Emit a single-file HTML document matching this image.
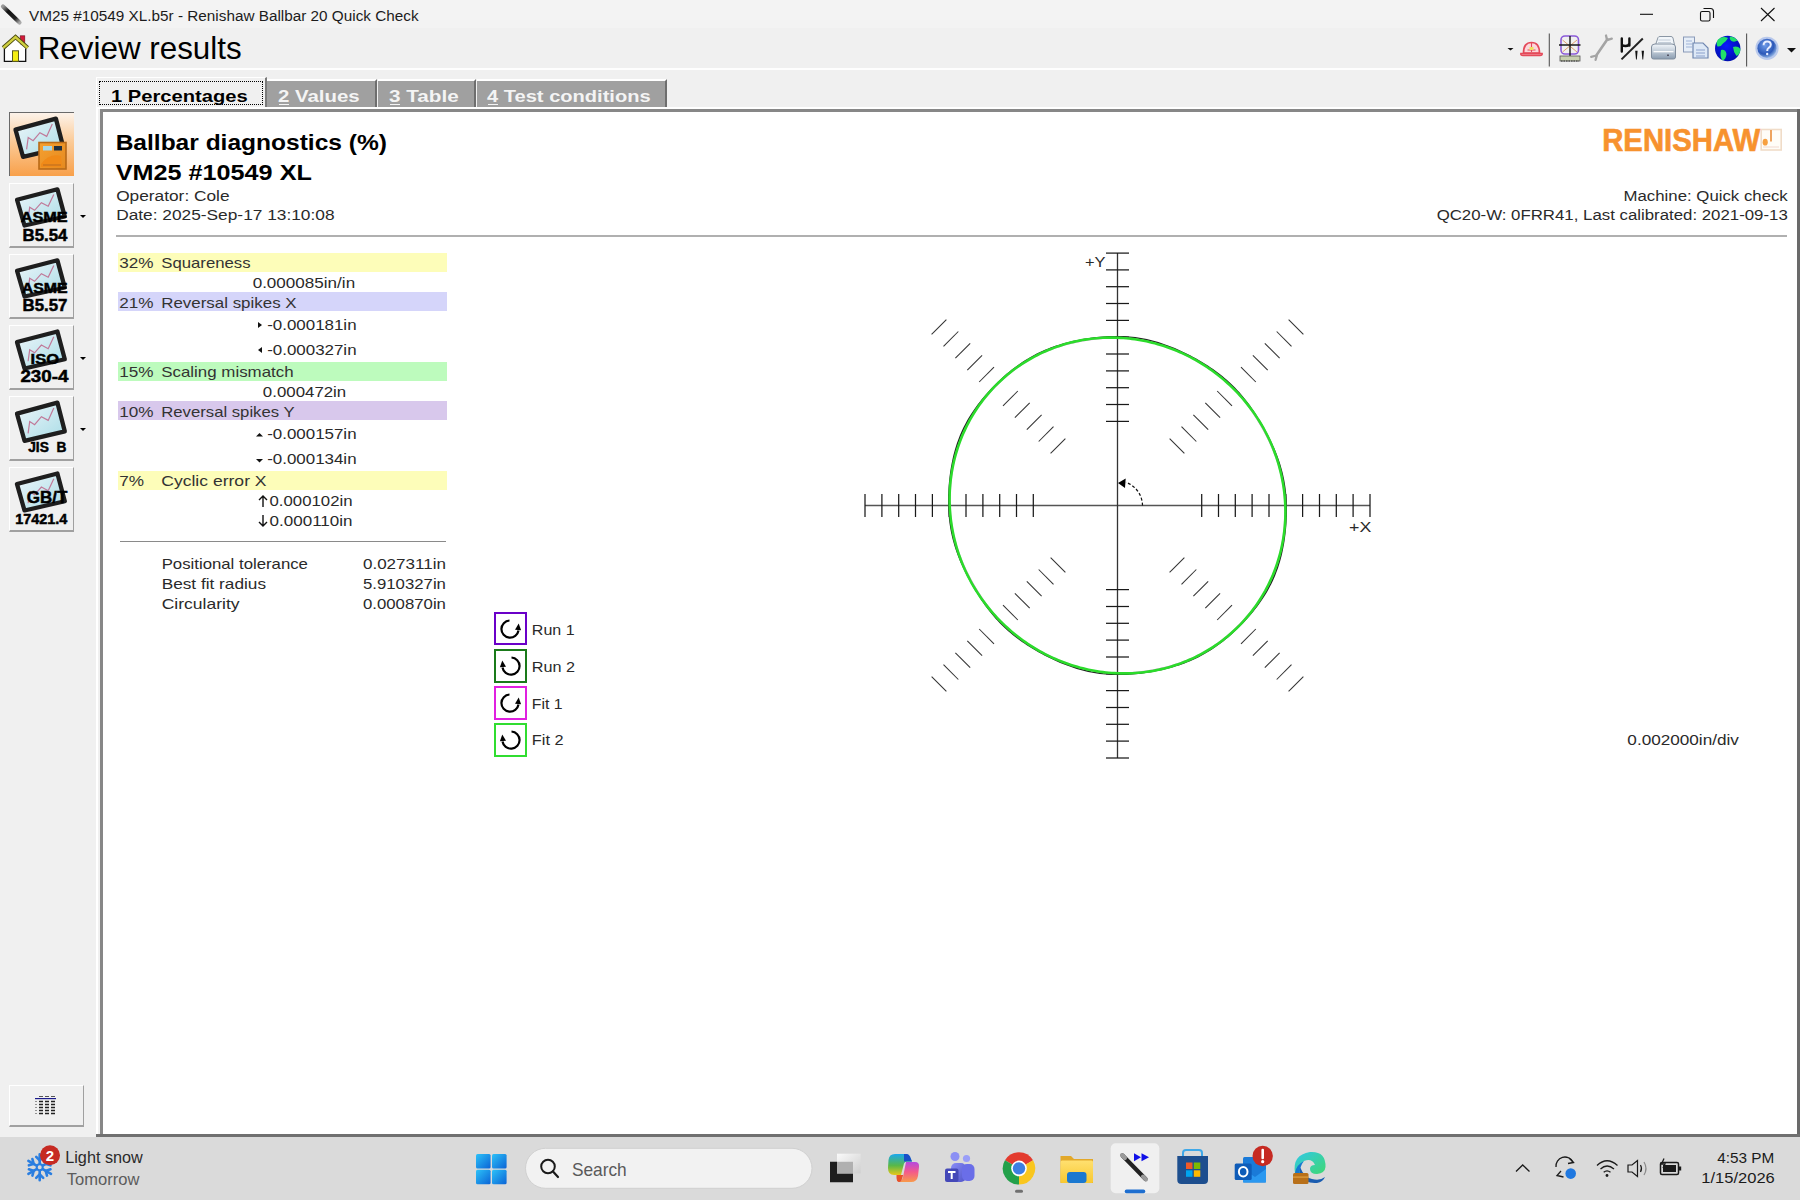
<!DOCTYPE html>
<html><head><meta charset="utf-8">
<style>
html,body{margin:0;padding:0;width:1800px;height:1200px;overflow:hidden;background:#f0f0f0;font-family:"Liberation Sans",sans-serif;}
.a{position:absolute;}
.t{position:absolute;white-space:pre;line-height:1;transform-origin:0 0;}
.btn{position:absolute;left:9px;width:65px;height:65px;box-sizing:border-box;background:#f0f0f0;border-top:1px solid #fff;border-left:1px solid #fff;border-right:1px solid #a0a0a0;border-bottom:2px solid #a0a0a0;}
.dd{position:absolute;width:0;height:0;border-left:3px solid transparent;border-right:3px solid transparent;border-top:3px solid #000;}
.tab{position:absolute;top:79px;height:28px;box-sizing:border-box;background:#a0a0a0;border-top:2px solid #fff;border-right:2px solid #6e6e6e;}
.bar{position:absolute;left:118px;width:329px;height:19px;}
svg{position:absolute;overflow:visible;}
</style></head><body>
<div class="a" style="left:0;top:0;width:1800px;height:28px;background:#f3f3f3"></div>
<!-- title icons -->
<svg style="left:0;top:0" width="40" height="70">
<defs><linearGradient id="pen" x1="0" y1="0" x2="1" y2="1"><stop offset="0" stop-color="#999"/><stop offset="0.3" stop-color="#111"/><stop offset="0.75" stop-color="#222"/><stop offset="1" stop-color="#aaa"/></linearGradient></defs>
<line x1="3" y1="6.5" x2="19.5" y2="22.5" stroke="url(#pen)" stroke-width="4.2" stroke-linecap="round"/>
<rect x="20.2" y="35.8" width="4.6" height="9" fill="#d41a3a" stroke="#6a1020" stroke-width="0.6"/>
<polygon points="15.5,40 5,49 5,61.3 26,61.3 26,49" fill="#fff"/>
<path d="M4.4 48.5 V61.3 H25.7 V48.5" fill="none" stroke="#111" stroke-width="1.3"/>
<path d="M3.2 47.8 L15.5 37 L27.6 47.8" fill="none" stroke="#4a4a10" stroke-width="4.2" stroke-linejoin="miter"/>
<path d="M3.2 47.8 L15.5 37 L27.6 47.8" fill="none" stroke="#d0d040" stroke-width="2.4" stroke-linejoin="miter"/>
<rect x="12.5" y="50.8" width="6" height="10.5" fill="#f5ee10" stroke="#5a5a20" stroke-width="1"/>
</svg>
<!-- window controls -->
<svg style="left:1630px;top:0" width="170" height="30">
<line x1="10" y1="14.3" x2="23" y2="14.3" stroke="#111" stroke-width="1.1"/>
<rect x="70.5" y="11.5" width="9.5" height="9.5" rx="1.6" fill="none" stroke="#111" stroke-width="1.1"/>
<path d="M73.5 8.5 H80.5 Q83.5 8.5 83.5 11.5 V18" fill="none" stroke="#111" stroke-width="1.1"/>
<path d="M131 8 L144.5 21 M144.5 8 L131 21" stroke="#111" stroke-width="1.1"/>
</svg>
<!-- toolbar icons -->
<svg style="left:1500px;top:30px" width="300" height="40">
<defs>
<radialGradient id="glb" cx="0.45" cy="0.4" r="0.6"><stop offset="0" stop-color="#0a18ff"/><stop offset="1" stop-color="#0010b0"/></radialGradient>
<radialGradient id="hlp" cx="0.4" cy="0.35" r="0.65"><stop offset="0" stop-color="#6f9be8"/><stop offset="0.7" stop-color="#2c58b8"/><stop offset="1" stop-color="#8aaee0"/></radialGradient>
<linearGradient id="prt" x1="0" y1="0" x2="0" y2="1"><stop offset="0" stop-color="#f4f8fc"/><stop offset="1" stop-color="#8a9cb0"/></linearGradient>
</defs>
<polygon points="7.5,18 13.5,18 10.5,20.5" fill="#111"/>
<path d="M23.5 23 Q23.5 12.5 31.5 12.5 Q39.5 12.5 39.5 23 Z" fill="#fbd8dc" stroke="#e44a5a" stroke-width="1.7"/>
<path d="M20.8 23.5 H42.2 Q42.5 25.5 40 25.5 H23 Q20.5 25.5 20.8 23.5 Z" fill="#f6a0aa" stroke="#e44a5a" stroke-width="1.4"/>
<path d="M31.5 13 V22 M27.5 20 H35.5" stroke="#e44a5a" stroke-width="1.1"/>
<rect x="29.5" y="17" width="4" height="3" fill="#f0e060"/>
<line x1="49.3" y1="3.5" x2="49.3" y2="36.5" stroke="#555" stroke-width="1.1"/>
<rect x="61" y="6" width="17.5" height="18" rx="4" fill="none" stroke="#8a5ad8" stroke-width="1.6"/>
<path d="M62.5 10 L77 22 M77 10 L62.5 22" stroke="#e0a070" stroke-width="1"/>
<path d="M59 15 H80.5 M70 6 V31" stroke="#1a1a1a" stroke-width="1.4"/>
<rect x="60" y="26" width="20" height="5" fill="#c8d0b0" stroke="#555" stroke-width="0.8"/>
<path d="M61 31 H79" stroke="#333" stroke-width="1" stroke-dasharray="1.5 1"/>
<path d="M96.6 25.1 L107.4 9.2" stroke="#a4a4a4" stroke-width="2.6" stroke-linecap="round"/>
<path d="M106.8 9 L106 5.5 M107.8 9.8 L111.8 8.6" stroke="#a4a4a4" stroke-width="2.3" stroke-linecap="round"/>
<path d="M96.4 25.5 L91.2 26.8 M96.8 25.6 L95.6 29.8" stroke="#a4a4a4" stroke-width="2.3" stroke-linecap="round"/>
<path d="M121.8 8.5 V21.5 M121.8 14 Q121.8 16 125.5 16 Q129.4 16 129.4 13 M129.4 8.5 V15.5" fill="none" stroke="#111" stroke-width="2.4" stroke-linecap="round"/>
<line x1="121.5" y1="29.4" x2="142.8" y2="8.5" stroke="#222" stroke-width="2"/>
<path d="M135.2 20.8 H137.6 L136.8 29.4 H136 Z M141.6 20.8 H144 L143.2 29.4 H142.4 Z" fill="#111"/>
<path d="M155.5 15 L158 7.5 Q158.5 6.5 160 6.5 H171 Q172.5 6.5 173 8 L174.5 15 Z" fill="#f2f6fa" stroke="#8a96a4" stroke-width="1"/>
<path d="M158.5 10 H170.5 M158 12.5 H171" stroke="#b8c4d0" stroke-width="0.8"/>
<path d="M151.5 17 Q151.5 14 155 14 H172 Q175.5 14 175.5 17 V27 Q175.5 29 173.5 29 H153.5 Q151.5 29 151.5 27 Z" fill="url(#prt)" stroke="#7f8c9c" stroke-width="1"/>
<rect x="153.5" y="21" width="20" height="1.3" fill="#fff" opacity="0.9"/>
<rect x="167" y="24.5" width="2" height="1.5" fill="#556"/>
<rect x="183.5" y="7" width="11" height="15" fill="#e6eef8" stroke="#8a9ab8" stroke-width="1"/>
<path d="M186 11 H192 M186 14 H192 M186 17 H192" stroke="#a0b4d8" stroke-width="1"/>
<path d="M193 13 H203 L208 18 V28 H193 Z" fill="#dde8f6" stroke="#6f86b0" stroke-width="1.2"/>
<path d="M196 20 H205 M196 23 H205 M196 26 H205" stroke="#8aa0cc" stroke-width="1"/>
<circle cx="227.7" cy="18.5" r="12.7" fill="url(#glb)"/>
<path d="M218 9.5 Q223 5.5 228 8 Q226 12 223 13.5 Q221 17 217.5 16.5 Q215.5 13 218 9.5 Z M230 6.5 Q235 7 237.5 10.5 Q234.5 12.5 231.5 11 Q229 9 230 6.5 Z M233 17 Q237.5 15.5 240.5 19 Q240 24.5 236.5 26 Q233.5 22.5 233 17 Z M221 20 Q225.5 19 226.5 24 Q226 29.5 222.5 30.5 Q219.5 26.5 221 20 Z" fill="#22e06a"/>
<line x1="246.6" y1="3.5" x2="246.6" y2="36.5" stroke="#555" stroke-width="1.1"/>
<circle cx="267" cy="18.3" r="11.6" fill="#b8c8ec"/>
<circle cx="267" cy="18.3" r="9.6" fill="url(#hlp)"/>
<path d="M263.6 15.2 Q263.6 11.5 267.2 11.5 Q270.8 11.5 270.8 14.8 Q270.8 16.8 268.5 18 Q267.2 18.8 267.2 21" fill="none" stroke="#e8eeff" stroke-width="2"/>
<circle cx="267.2" cy="24" r="1.2" fill="#e8eeff"/>
<polygon points="287,18 296,18 291.5,22.5" fill="#111"/>
</svg>
<!-- title bar line -->
<div class="a" style="left:0;top:68px;width:1800px;height:2px;background:#fefefe"></div>
<!-- tabs -->
<div class="a" style="left:96px;top:77px;width:171px;height:31px;box-sizing:border-box;background:#f0f0f0;border-top:1px solid #fff;border-left:1px solid #fff;border-right:2px solid #7a7a7a"></div>
<div class="a" style="left:99px;top:81px;width:164px;height:24px;box-sizing:border-box;border:1px dotted #000"></div>
<div class="tab" style="left:267px;width:110px"></div>
<div class="tab" style="left:378px;width:98px"></div>
<div class="tab" style="left:477px;width:190px"></div>
<div class="a" style="left:279px;top:104px;width:10px;height:1px;background:#f4f4f4"></div>
<div class="a" style="left:390px;top:104px;width:10px;height:1px;background:#f4f4f4"></div>
<div class="a" style="left:488px;top:104px;width:10px;height:1px;background:#f4f4f4"></div>
<!-- sidebar -->
<svg style="left:0;top:0" width="1" height="1"><defs>
<linearGradient id="scr" x1="0" y1="0" x2="1" y2="1"><stop offset="0" stop-color="#eef6fa"/><stop offset="1" stop-color="#a8dce6"/></linearGradient>
<linearGradient id="org" x1="0" y1="0" x2="0" y2="1"><stop offset="0" stop-color="#fdf4ec"/><stop offset="0.45" stop-color="#fbc995"/><stop offset="1" stop-color="#f89c40"/></linearGradient>
<linearGradient id="org2" x1="0" y1="0" x2="1" y2="1"><stop offset="0" stop-color="#f6a030"/><stop offset="1" stop-color="#e48a20"/></linearGradient>
<g id="frm"><polygon points="8,17.6 48.4,6.6 55.8,35.4 15.5,44.8" fill="url(#scr)" stroke="#1e1e1e" stroke-width="4.3" stroke-linejoin="round"/>
<polyline points="19.1,37.4 20.7,25.6 25.6,28.7 32.4,20.7 39.2,24.4 44.8,12" fill="none" stroke="#c07898" stroke-width="1.2"/></g>
</defs></svg>
<div class="a" style="left:9px;top:112px;width:65px;height:64px;box-sizing:border-box;background:linear-gradient(#fdf3ea,#fbcb98 45%,#f8a04a);border-top:1px solid #6a6a6a;border-left:1px solid #6a6a6a"></div>
<svg style="left:9px;top:112px" width="65" height="64"><use href="#frm" transform="translate(-1.5,0)"/>
<rect x="30" y="30.5" width="27" height="26.5" fill="url(#org2)" stroke="#b86a18" stroke-width="1.6"/>
<rect x="34" y="34" width="9" height="4.5" fill="#a8d8e8"/><rect x="45" y="34" width="8" height="4.5" fill="#203040"/>
<path d="M32 52 Q40 41 52 44 L53 55 L32 55 Z" fill="#f08a18"/><path d="M34 53 H52" stroke="#c27020" stroke-width="1.2"/></svg>
<div class="btn" style="top:183px"></div><svg style="left:9px;top:183px" width="65" height="65"><use href="#frm" transform="scale(1,0.95)"/></svg>
<div class="btn" style="top:254px"></div><svg style="left:9px;top:254px" width="65" height="65"><use href="#frm" transform="scale(1,0.95)"/></svg>
<div class="btn" style="top:325px"></div><svg style="left:9px;top:325px" width="65" height="65"><use href="#frm" transform="scale(1,0.97)"/></svg>
<div class="btn" style="top:396px"></div><svg style="left:9px;top:396px" width="65" height="65"><use href="#frm"/></svg>
<div class="btn" style="top:467px"></div><svg style="left:9px;top:467px" width="65" height="65"><use href="#frm" transform="scale(1,0.97)"/></svg>
<div class="dd" style="left:79.5px;top:215px"></div>
<div class="dd" style="left:79.5px;top:357px"></div>
<div class="dd" style="left:79.5px;top:428px"></div>
<div class="btn" style="top:1085px;width:75px;height:42px"></div>
<svg style="left:35px;top:1096px" width="22" height="20">
<rect x="0" y="2" width="21" height="1.2" fill="#1a1a8a"/>
<path d="M4 0.5 H8 M10 0.5 H14 M16 0.5 H20" stroke="#555" stroke-width="1"/>
<path d="M1 5 V6 M1 8 V9 M1 11 V12 M1 14 V15 M1 17 V18" stroke="#333" stroke-width="1"/>
<path d="M4 5.5 H8 M10 5.5 H14 M16 5.5 H20 M4 8.5 H8 M10 8.5 H14 M16 8.5 H20 M4 11.5 H8 M10 11.5 H14 M16 11.5 H20 M4 14.5 H8 M10 14.5 H14 M16 14.5 H20 M4 17.5 H8 M10 17.5 H14 M16 17.5 H20" stroke="#222" stroke-width="1.3"/>
</svg>
<!-- panel area -->
<div class="a" style="left:96px;top:107px;width:1704px;height:2px;background:#fff"></div>
<div class="a" style="left:96px;top:107px;width:2px;height:1030px;background:#fff"></div>
<div class="a" style="left:100px;top:109px;width:1697px;height:1025px;background:#fff;border-left:3px solid #878787;border-top:3px solid #878787;box-sizing:border-box"></div>
<div class="a" style="left:1797px;top:109px;width:3px;height:1028px;background:#6a6a6a"></div>
<div class="a" style="left:96px;top:1134px;width:1704px;height:3px;background:#707070"></div>
<!-- taskbar -->
<div class="a" style="left:0;top:1137px;width:1800px;height:63px;background:#dadada"></div>
<!-- header lines -->
<div class="a" style="left:116px;top:235px;width:1671px;height:2px;background:#b0b0b0"></div>
<!-- logo -->
<svg style="left:1755px;top:125px" width="35" height="30">
<rect x="6.2" y="4.5" width="20" height="20.5" fill="#fffdf8" stroke="#f0dcc8" stroke-width="1.6"/>
<line x1="16" y1="5" x2="16" y2="16.5" stroke="#eea460" stroke-width="2"/>
<ellipse cx="10.2" cy="17.2" rx="2.6" ry="3.4" fill="#f7a040"/>
<line x1="8" y1="22" x2="24" y2="22" stroke="#f4e0d8" stroke-width="1.2"/>
</svg>
<!-- diagnostics bars -->
<div class="bar" style="top:253px;background:#fdfdb9"></div>
<div class="bar" style="top:292px;background:#d5d5fa"></div>
<div class="bar" style="top:362px;background:#bdfbbd"></div>
<div class="bar" style="top:401px;background:#d8c8ec"></div>
<div class="bar" style="top:471px;background:#fdfdb9"></div>
<div class="a" style="left:120px;top:541px;width:326px;height:1px;background:#8a8a8a"></div>
<!-- small arrows -->
<svg style="left:0;top:0" width="1" height="1">
<polygon points="258,322 262,325 258,328" fill="#111"/>
<polygon points="262,347 258,350 262,353" fill="#111"/>
<polygon points="256,436.5 259.5,433 263,436.5" fill="#111"/>
<polygon points="256,459 259.5,462.5 263,459" fill="#111"/>
<path d="M263 507 V496 M259 500 L263 496 L267 500" stroke="#111" stroke-width="1.4" fill="none"/>
<path d="M263 515 V526 M259 522 L263 526 L267 522" stroke="#111" stroke-width="1.4" fill="none"/>
</svg>
<!-- legend -->
<div class="a" style="left:494px;top:612px;width:33px;height:33px;box-sizing:border-box;border:2px solid #6a00c8"></div>
<div class="a" style="left:494px;top:649px;width:33px;height:34px;box-sizing:border-box;border:2px solid #1a7a1a"></div>
<div class="a" style="left:494px;top:686px;width:33px;height:34px;box-sizing:border-box;border:2px solid #e020e0"></div>
<div class="a" style="left:494px;top:723px;width:33px;height:34px;box-sizing:border-box;border:2px solid #30dd30"></div>
<svg style="left:0;top:0" width="1" height="1">
<defs>
<g id="cw"><path d="M -1 -8.5 A 8.6 8.6 0 1 0 8 1.5" fill="none" stroke="#000" stroke-width="2.2"/><polygon points="4.5,0.8 10.6,1.2 8.2,-5.5" fill="#000"/></g>
</defs>
<use href="#cw" x="510.5" y="629"/>
<use href="#cw" transform="translate(510.5,666) scale(-1,1)"/>
<use href="#cw" x="510.5" y="703"/>
<use href="#cw" transform="translate(510.5,740) scale(-1,1)"/>
</svg>
<svg class="a" style="left:0;top:0" width="1800" height="1200" viewBox="0 0 1800 1200"><line x1="865.0" y1="505.5" x2="1370.0" y2="505.5" stroke="#555" stroke-width="1.3"/><line x1="1117.5" y1="253.1" x2="1117.5" y2="758.0" stroke="#333" stroke-width="1.3"/><line x1="1033.3" y1="494.0" x2="1033.3" y2="517.0" stroke="#1a1a1a" stroke-width="1.25"/><line x1="1106.0" y1="421.4" x2="1129.0" y2="421.4" stroke="#1a1a1a" stroke-width="1.25"/><line x1="1201.7" y1="494.0" x2="1201.7" y2="517.0" stroke="#1a1a1a" stroke-width="1.25"/><line x1="1106.0" y1="589.6" x2="1129.0" y2="589.6" stroke="#1a1a1a" stroke-width="1.25"/><line x1="1016.5" y1="494.0" x2="1016.5" y2="517.0" stroke="#1a1a1a" stroke-width="1.25"/><line x1="1106.0" y1="404.5" x2="1129.0" y2="404.5" stroke="#1a1a1a" stroke-width="1.25"/><line x1="1218.5" y1="494.0" x2="1218.5" y2="517.0" stroke="#1a1a1a" stroke-width="1.25"/><line x1="1106.0" y1="606.5" x2="1129.0" y2="606.5" stroke="#1a1a1a" stroke-width="1.25"/><line x1="999.7" y1="494.0" x2="999.7" y2="517.0" stroke="#1a1a1a" stroke-width="1.25"/><line x1="1106.0" y1="387.7" x2="1129.0" y2="387.7" stroke="#1a1a1a" stroke-width="1.25"/><line x1="1235.3" y1="494.0" x2="1235.3" y2="517.0" stroke="#1a1a1a" stroke-width="1.25"/><line x1="1106.0" y1="623.3" x2="1129.0" y2="623.3" stroke="#1a1a1a" stroke-width="1.25"/><line x1="982.9" y1="494.0" x2="982.9" y2="517.0" stroke="#1a1a1a" stroke-width="1.25"/><line x1="1106.0" y1="370.9" x2="1129.0" y2="370.9" stroke="#1a1a1a" stroke-width="1.25"/><line x1="1252.1" y1="494.0" x2="1252.1" y2="517.0" stroke="#1a1a1a" stroke-width="1.25"/><line x1="1106.0" y1="640.1" x2="1129.0" y2="640.1" stroke="#1a1a1a" stroke-width="1.25"/><line x1="966.0" y1="494.0" x2="966.0" y2="517.0" stroke="#1a1a1a" stroke-width="1.25"/><line x1="1106.0" y1="354.0" x2="1129.0" y2="354.0" stroke="#1a1a1a" stroke-width="1.25"/><line x1="1269.0" y1="494.0" x2="1269.0" y2="517.0" stroke="#1a1a1a" stroke-width="1.25"/><line x1="1106.0" y1="657.0" x2="1129.0" y2="657.0" stroke="#1a1a1a" stroke-width="1.25"/><line x1="949.2" y1="494.0" x2="949.2" y2="517.0" stroke="#1a1a1a" stroke-width="1.25"/><line x1="1106.0" y1="337.2" x2="1129.0" y2="337.2" stroke="#1a1a1a" stroke-width="1.25"/><line x1="1285.8" y1="494.0" x2="1285.8" y2="517.0" stroke="#1a1a1a" stroke-width="1.25"/><line x1="1106.0" y1="673.8" x2="1129.0" y2="673.8" stroke="#1a1a1a" stroke-width="1.25"/><line x1="932.4" y1="494.0" x2="932.4" y2="517.0" stroke="#1a1a1a" stroke-width="1.25"/><line x1="1106.0" y1="320.4" x2="1129.0" y2="320.4" stroke="#1a1a1a" stroke-width="1.25"/><line x1="1302.6" y1="494.0" x2="1302.6" y2="517.0" stroke="#1a1a1a" stroke-width="1.25"/><line x1="1106.0" y1="690.6" x2="1129.0" y2="690.6" stroke="#1a1a1a" stroke-width="1.25"/><line x1="915.5" y1="494.0" x2="915.5" y2="517.0" stroke="#1a1a1a" stroke-width="1.25"/><line x1="1106.0" y1="303.5" x2="1129.0" y2="303.5" stroke="#1a1a1a" stroke-width="1.25"/><line x1="1319.5" y1="494.0" x2="1319.5" y2="517.0" stroke="#1a1a1a" stroke-width="1.25"/><line x1="1106.0" y1="707.5" x2="1129.0" y2="707.5" stroke="#1a1a1a" stroke-width="1.25"/><line x1="898.7" y1="494.0" x2="898.7" y2="517.0" stroke="#1a1a1a" stroke-width="1.25"/><line x1="1106.0" y1="286.7" x2="1129.0" y2="286.7" stroke="#1a1a1a" stroke-width="1.25"/><line x1="1336.3" y1="494.0" x2="1336.3" y2="517.0" stroke="#1a1a1a" stroke-width="1.25"/><line x1="1106.0" y1="724.3" x2="1129.0" y2="724.3" stroke="#1a1a1a" stroke-width="1.25"/><line x1="881.9" y1="494.0" x2="881.9" y2="517.0" stroke="#1a1a1a" stroke-width="1.25"/><line x1="1106.0" y1="269.9" x2="1129.0" y2="269.9" stroke="#1a1a1a" stroke-width="1.25"/><line x1="1353.1" y1="494.0" x2="1353.1" y2="517.0" stroke="#1a1a1a" stroke-width="1.25"/><line x1="1106.0" y1="741.1" x2="1129.0" y2="741.1" stroke="#1a1a1a" stroke-width="1.25"/><line x1="865.0" y1="494.0" x2="865.0" y2="517.0" stroke="#1a1a1a" stroke-width="1.25"/><line x1="1106.0" y1="253.1" x2="1129.0" y2="253.1" stroke="#1a1a1a" stroke-width="1.25"/><line x1="1370.0" y1="494.0" x2="1370.0" y2="517.0" stroke="#1a1a1a" stroke-width="1.25"/><line x1="1106.0" y1="758.0" x2="1129.0" y2="758.0" stroke="#1a1a1a" stroke-width="1.25"/><line x1="1050.6" y1="453.4" x2="1065.4" y2="438.6" stroke="#333" stroke-width="1.05"/><line x1="1050.6" y1="557.6" x2="1065.4" y2="572.4" stroke="#333" stroke-width="1.05"/><line x1="1184.4" y1="453.4" x2="1169.6" y2="438.6" stroke="#333" stroke-width="1.05"/><line x1="1184.4" y1="557.6" x2="1169.6" y2="572.4" stroke="#333" stroke-width="1.05"/><line x1="1038.7" y1="441.5" x2="1053.5" y2="426.7" stroke="#333" stroke-width="1.05"/><line x1="1038.7" y1="569.5" x2="1053.5" y2="584.3" stroke="#333" stroke-width="1.05"/><line x1="1196.3" y1="441.5" x2="1181.5" y2="426.7" stroke="#333" stroke-width="1.05"/><line x1="1196.3" y1="569.5" x2="1181.5" y2="584.3" stroke="#333" stroke-width="1.05"/><line x1="1026.8" y1="429.6" x2="1041.6" y2="414.8" stroke="#333" stroke-width="1.05"/><line x1="1026.8" y1="581.4" x2="1041.6" y2="596.2" stroke="#333" stroke-width="1.05"/><line x1="1208.2" y1="429.6" x2="1193.4" y2="414.8" stroke="#333" stroke-width="1.05"/><line x1="1208.2" y1="581.4" x2="1193.4" y2="596.2" stroke="#333" stroke-width="1.05"/><line x1="1014.9" y1="417.7" x2="1029.7" y2="402.9" stroke="#333" stroke-width="1.05"/><line x1="1014.9" y1="593.3" x2="1029.7" y2="608.1" stroke="#333" stroke-width="1.05"/><line x1="1220.1" y1="417.7" x2="1205.3" y2="402.9" stroke="#333" stroke-width="1.05"/><line x1="1220.1" y1="593.3" x2="1205.3" y2="608.1" stroke="#333" stroke-width="1.05"/><line x1="1003.0" y1="405.8" x2="1017.8" y2="391.0" stroke="#333" stroke-width="1.05"/><line x1="1003.0" y1="605.2" x2="1017.8" y2="620.0" stroke="#333" stroke-width="1.05"/><line x1="1232.0" y1="405.8" x2="1217.2" y2="391.0" stroke="#333" stroke-width="1.05"/><line x1="1232.0" y1="605.2" x2="1217.2" y2="620.0" stroke="#333" stroke-width="1.05"/><line x1="979.2" y1="382.0" x2="994.0" y2="367.2" stroke="#333" stroke-width="1.05"/><line x1="979.2" y1="629.0" x2="994.0" y2="643.8" stroke="#333" stroke-width="1.05"/><line x1="1255.8" y1="382.0" x2="1241.0" y2="367.2" stroke="#333" stroke-width="1.05"/><line x1="1255.8" y1="629.0" x2="1241.0" y2="643.8" stroke="#333" stroke-width="1.05"/><line x1="967.3" y1="370.1" x2="982.1" y2="355.3" stroke="#333" stroke-width="1.05"/><line x1="967.3" y1="640.9" x2="982.1" y2="655.7" stroke="#333" stroke-width="1.05"/><line x1="1267.7" y1="370.1" x2="1252.9" y2="355.3" stroke="#333" stroke-width="1.05"/><line x1="1267.7" y1="640.9" x2="1252.9" y2="655.7" stroke="#333" stroke-width="1.05"/><line x1="955.4" y1="358.2" x2="970.2" y2="343.4" stroke="#333" stroke-width="1.05"/><line x1="955.4" y1="652.8" x2="970.2" y2="667.6" stroke="#333" stroke-width="1.05"/><line x1="1279.6" y1="358.2" x2="1264.8" y2="343.4" stroke="#333" stroke-width="1.05"/><line x1="1279.6" y1="652.8" x2="1264.8" y2="667.6" stroke="#333" stroke-width="1.05"/><line x1="943.5" y1="346.3" x2="958.3" y2="331.5" stroke="#333" stroke-width="1.05"/><line x1="943.5" y1="664.7" x2="958.3" y2="679.5" stroke="#333" stroke-width="1.05"/><line x1="1291.5" y1="346.3" x2="1276.7" y2="331.5" stroke="#333" stroke-width="1.05"/><line x1="1291.5" y1="664.7" x2="1276.7" y2="679.5" stroke="#333" stroke-width="1.05"/><line x1="931.6" y1="334.4" x2="946.4" y2="319.6" stroke="#333" stroke-width="1.05"/><line x1="931.6" y1="676.6" x2="946.4" y2="691.4" stroke="#333" stroke-width="1.05"/><line x1="1303.4" y1="334.4" x2="1288.6" y2="319.6" stroke="#333" stroke-width="1.05"/><line x1="1303.4" y1="676.6" x2="1288.6" y2="691.4" stroke="#333" stroke-width="1.05"/><path d="M1286.20 505.50 L1286.10 502.56 L1285.96 499.62 L1285.76 496.68 L1285.51 493.75 L1285.20 490.83 L1284.83 487.91 L1284.41 485.01 L1283.93 482.11 L1283.39 479.23 L1282.79 476.36 L1282.13 473.50 L1281.41 470.66 L1280.63 467.84 L1279.80 465.03 L1278.91 462.25 L1277.97 459.49 L1276.98 456.74 L1275.94 454.02 L1274.85 451.32 L1273.72 448.64 L1272.56 445.98 L1271.35 443.34 L1270.10 440.72 L1268.83 438.13 L1267.52 435.55 L1266.18 432.99 L1264.81 430.44 L1263.41 427.92 L1261.98 425.41 L1260.53 422.92 L1259.05 420.45 L1257.53 418.00 L1255.99 415.56 L1254.42 413.15 L1252.82 410.75 L1251.18 408.38 L1249.51 406.03 L1247.80 403.70 L1246.05 401.40 L1244.27 399.13 L1242.44 396.89 L1240.57 394.68 L1238.67 392.51 L1236.72 390.37 L1234.72 388.28 L1232.69 386.22 L1230.61 384.20 L1228.50 382.23 L1226.34 380.29 L1224.14 378.41 L1221.91 376.56 L1219.65 374.76 L1217.35 373.00 L1215.02 371.28 L1212.65 369.60 L1210.27 367.97 L1207.85 366.37 L1205.41 364.81 L1202.95 363.29 L1200.46 361.80 L1197.96 360.35 L1195.43 358.93 L1192.89 357.54 L1190.33 356.18 L1187.74 354.86 L1185.14 353.57 L1182.52 352.31 L1179.89 351.09 L1177.23 349.90 L1174.55 348.75 L1171.86 347.64 L1169.14 346.57 L1166.40 345.54 L1163.65 344.56 L1160.87 343.62 L1158.08 342.74 L1155.27 341.91 L1152.44 341.14 L1149.59 340.42 L1146.72 339.76 L1143.85 339.16 L1140.95 338.63 L1138.05 338.16 L1135.13 337.75 L1132.21 337.40 L1129.27 337.12 L1126.34 336.90 L1123.39 336.73 L1120.45 336.63 L1117.50 336.59 L1114.55 336.60 L1111.60 336.66 L1108.66 336.77 L1105.71 336.94 L1102.77 337.15 L1099.83 337.40 L1096.90 337.70 L1093.96 338.04 L1091.04 338.42 L1088.11 338.84 L1085.19 339.30 L1082.28 339.80 L1079.37 340.34 L1076.47 340.93 L1073.57 341.55 L1070.68 342.22 L1067.80 342.93 L1064.92 343.69 L1062.06 344.49 L1059.21 345.35 L1056.37 346.26 L1053.55 347.22 L1050.75 348.24 L1047.96 349.32 L1045.20 350.45 L1042.46 351.64 L1039.74 352.89 L1037.05 354.20 L1034.39 355.57 L1031.76 357.00 L1029.17 358.49 L1026.60 360.03 L1024.07 361.63 L1021.57 363.27 L1019.10 364.97 L1016.67 366.72 L1014.28 368.52 L1011.92 370.36 L1009.59 372.24 L1007.29 374.16 L1005.03 376.12 L1002.80 378.11 L1000.60 380.14 L998.43 382.20 L996.30 384.30 L994.19 386.42 L992.12 388.58 L990.07 390.76 L988.06 392.98 L986.08 395.23 L984.14 397.51 L982.23 399.82 L980.36 402.16 L978.53 404.53 L976.74 406.94 L975.00 409.38 L973.30 411.86 L971.65 414.36 L970.06 416.91 L968.52 419.48 L967.03 422.09 L965.61 424.74 L964.24 427.41 L962.94 430.11 L961.70 432.85 L960.52 435.61 L959.41 438.39 L958.36 441.20 L957.37 444.03 L956.45 446.88 L955.59 449.75 L954.79 452.63 L954.04 455.53 L953.36 458.43 L952.73 461.35 L952.15 464.27 L951.62 467.20 L951.14 470.14 L950.70 473.08 L950.32 476.02 L949.97 478.97 L949.67 481.91 L949.41 484.86 L949.19 487.81 L949.02 490.76 L948.89 493.71 L948.80 496.66 L948.75 499.61 L948.75 502.55 L948.80 505.50 L948.90 508.44 L949.04 511.38 L949.24 514.32 L949.49 517.25 L949.80 520.17 L950.17 523.09 L950.59 525.99 L951.07 528.89 L951.61 531.77 L952.21 534.64 L952.87 537.50 L953.59 540.34 L954.37 543.16 L955.20 545.97 L956.09 548.75 L957.03 551.51 L958.02 554.26 L959.06 556.98 L960.15 559.68 L961.28 562.36 L962.44 565.02 L963.65 567.66 L964.90 570.28 L966.17 572.87 L967.48 575.45 L968.82 578.01 L970.19 580.56 L971.59 583.08 L973.02 585.59 L974.47 588.08 L975.95 590.55 L977.47 593.00 L979.01 595.44 L980.58 597.85 L982.18 600.25 L983.82 602.62 L985.49 604.97 L987.20 607.30 L988.95 609.60 L990.73 611.87 L992.56 614.11 L994.43 616.32 L996.33 618.49 L998.28 620.63 L1000.28 622.72 L1002.31 624.78 L1004.39 626.80 L1006.50 628.77 L1008.66 630.71 L1010.86 632.59 L1013.09 634.44 L1015.35 636.24 L1017.65 638.00 L1019.98 639.72 L1022.35 641.40 L1024.73 643.03 L1027.15 644.63 L1029.59 646.19 L1032.05 647.71 L1034.54 649.20 L1037.04 650.65 L1039.57 652.07 L1042.11 653.46 L1044.67 654.82 L1047.26 656.14 L1049.86 657.43 L1052.48 658.69 L1055.11 659.91 L1057.77 661.10 L1060.45 662.25 L1063.14 663.36 L1065.86 664.43 L1068.60 665.46 L1071.35 666.44 L1074.13 667.38 L1076.92 668.26 L1079.73 669.09 L1082.56 669.86 L1085.41 670.58 L1088.28 671.24 L1091.15 671.84 L1094.05 672.37 L1096.95 672.84 L1099.87 673.25 L1102.79 673.60 L1105.73 673.88 L1108.66 674.10 L1111.61 674.27 L1114.55 674.37 L1117.50 674.41 L1120.45 674.40 L1123.40 674.34 L1126.34 674.23 L1129.29 674.06 L1132.23 673.85 L1135.17 673.60 L1138.10 673.30 L1141.04 672.96 L1143.96 672.58 L1146.89 672.16 L1149.81 671.70 L1152.72 671.20 L1155.63 670.66 L1158.53 670.07 L1161.43 669.45 L1164.32 668.78 L1167.20 668.07 L1170.08 667.31 L1172.94 666.51 L1175.79 665.65 L1178.63 664.74 L1181.45 663.78 L1184.25 662.76 L1187.04 661.68 L1189.80 660.55 L1192.54 659.36 L1195.26 658.11 L1197.95 656.80 L1200.61 655.43 L1203.24 654.00 L1205.83 652.51 L1208.40 650.97 L1210.93 649.37 L1213.43 647.73 L1215.90 646.03 L1218.33 644.28 L1220.72 642.48 L1223.08 640.64 L1225.41 638.76 L1227.71 636.84 L1229.97 634.88 L1232.20 632.89 L1234.40 630.86 L1236.57 628.80 L1238.70 626.70 L1240.81 624.58 L1242.88 622.42 L1244.93 620.24 L1246.94 618.02 L1248.92 615.77 L1250.86 613.49 L1252.77 611.18 L1254.64 608.84 L1256.47 606.47 L1258.26 604.06 L1260.00 601.62 L1261.70 599.14 L1263.35 596.64 L1264.94 594.09 L1266.48 591.52 L1267.97 588.91 L1269.39 586.26 L1270.76 583.59 L1272.06 580.89 L1273.30 578.15 L1274.48 575.39 L1275.59 572.61 L1276.64 569.80 L1277.63 566.97 L1278.55 564.12 L1279.41 561.25 L1280.21 558.37 L1280.96 555.47 L1281.64 552.57 L1282.27 549.65 L1282.85 546.73 L1283.38 543.80 L1283.86 540.86 L1284.30 537.92 L1284.68 534.98 L1285.03 532.03 L1285.33 529.09 L1285.59 526.14 L1285.81 523.19 L1285.98 520.24 L1286.11 517.29 L1286.20 514.34 L1286.25 511.39 L1286.25 508.45 L1286.20 505.50 Z" fill="none" stroke="#222" stroke-width="1.4"/><path d="M1284.70 505.50 L1284.59 502.58 L1284.44 499.67 L1284.23 496.76 L1283.97 493.86 L1283.66 490.96 L1283.29 488.08 L1282.86 485.20 L1282.38 482.33 L1281.85 479.47 L1281.25 476.63 L1280.60 473.80 L1279.90 470.98 L1279.14 468.18 L1278.33 465.40 L1277.46 462.64 L1276.54 459.89 L1275.58 457.17 L1274.57 454.47 L1273.51 451.78 L1272.41 449.12 L1271.27 446.48 L1270.08 443.85 L1268.86 441.25 L1267.61 438.67 L1266.32 436.10 L1265.00 433.56 L1263.64 431.04 L1262.26 428.53 L1260.84 426.04 L1259.40 423.58 L1257.92 421.13 L1256.41 418.70 L1254.87 416.29 L1253.30 413.90 L1251.69 411.54 L1250.05 409.20 L1248.38 406.88 L1246.66 404.59 L1244.92 402.32 L1243.13 400.08 L1241.31 397.88 L1239.44 395.70 L1237.54 393.56 L1235.60 391.46 L1233.61 389.39 L1231.59 387.36 L1229.53 385.36 L1227.43 383.41 L1225.29 381.50 L1223.12 379.62 L1220.92 377.79 L1218.67 376.00 L1216.40 374.25 L1214.10 372.54 L1211.77 370.88 L1209.40 369.25 L1207.02 367.65 L1204.61 366.10 L1202.17 364.58 L1199.71 363.10 L1197.24 361.65 L1194.73 360.24 L1192.21 358.87 L1189.67 357.52 L1187.11 356.21 L1184.53 354.94 L1181.94 353.70 L1179.32 352.49 L1176.68 351.33 L1174.02 350.20 L1171.35 349.11 L1168.65 348.06 L1165.94 347.06 L1163.21 346.10 L1160.46 345.19 L1157.68 344.33 L1154.90 343.52 L1152.09 342.76 L1149.27 342.06 L1146.43 341.41 L1143.58 340.82 L1140.72 340.29 L1137.84 339.81 L1134.96 339.40 L1132.06 339.04 L1129.16 338.75 L1126.25 338.51 L1123.34 338.33 L1120.42 338.21 L1117.50 338.14 L1114.58 338.13 L1111.66 338.16 L1108.73 338.25 L1105.81 338.39 L1102.90 338.58 L1099.98 338.81 L1097.07 339.08 L1094.16 339.41 L1091.25 339.77 L1088.35 340.18 L1085.45 340.63 L1082.56 341.12 L1079.67 341.66 L1076.79 342.24 L1073.92 342.86 L1071.06 343.53 L1068.20 344.25 L1065.35 345.01 L1062.52 345.82 L1059.70 346.68 L1056.89 347.60 L1054.09 348.56 L1051.32 349.58 L1048.56 350.66 L1045.83 351.79 L1043.11 352.98 L1040.42 354.23 L1037.76 355.53 L1035.12 356.89 L1032.51 358.30 L1029.94 359.77 L1027.39 361.29 L1024.87 362.87 L1022.39 364.50 L1019.94 366.17 L1017.52 367.90 L1015.14 369.67 L1012.79 371.48 L1010.48 373.34 L1008.19 375.23 L1005.94 377.17 L1003.73 379.14 L1001.54 381.15 L999.39 383.19 L997.27 385.27 L995.18 387.38 L993.13 389.52 L991.11 391.70 L989.13 393.91 L987.17 396.14 L985.26 398.41 L983.38 400.72 L981.55 403.05 L979.75 405.42 L978.00 407.82 L976.29 410.25 L974.62 412.72 L973.01 415.21 L971.45 417.74 L969.94 420.30 L968.48 422.90 L967.08 425.52 L965.74 428.17 L964.45 430.85 L963.23 433.56 L962.06 436.29 L960.96 439.05 L959.91 441.83 L958.93 444.63 L958.01 447.45 L957.14 450.28 L956.33 453.13 L955.58 456.00 L954.89 458.87 L954.24 461.76 L953.65 464.65 L953.11 467.55 L952.62 470.45 L952.18 473.37 L951.79 476.28 L951.44 479.20 L951.13 482.12 L950.87 485.04 L950.65 487.96 L950.48 490.89 L950.35 493.81 L950.27 496.74 L950.23 499.66 L950.24 502.58 L950.30 505.50 L950.41 508.42 L950.56 511.33 L950.77 514.24 L951.03 517.14 L951.34 520.04 L951.71 522.92 L952.14 525.80 L952.62 528.67 L953.15 531.53 L953.75 534.37 L954.40 537.20 L955.10 540.02 L955.86 542.82 L956.67 545.60 L957.54 548.36 L958.46 551.11 L959.42 553.83 L960.43 556.53 L961.49 559.22 L962.59 561.88 L963.73 564.52 L964.92 567.15 L966.14 569.75 L967.39 572.33 L968.68 574.90 L970.00 577.44 L971.36 579.96 L972.74 582.47 L974.16 584.96 L975.60 587.42 L977.08 589.87 L978.59 592.30 L980.13 594.71 L981.70 597.10 L983.31 599.46 L984.95 601.80 L986.62 604.12 L988.34 606.41 L990.08 608.68 L991.87 610.92 L993.69 613.12 L995.56 615.30 L997.46 617.44 L999.40 619.54 L1001.39 621.61 L1003.41 623.64 L1005.47 625.64 L1007.57 627.59 L1009.71 629.50 L1011.88 631.38 L1014.08 633.21 L1016.33 635.00 L1018.60 636.75 L1020.90 638.46 L1023.23 640.12 L1025.60 641.75 L1027.98 643.35 L1030.39 644.90 L1032.83 646.42 L1035.29 647.90 L1037.76 649.35 L1040.27 650.76 L1042.79 652.13 L1045.33 653.48 L1047.89 654.79 L1050.47 656.06 L1053.06 657.30 L1055.68 658.51 L1058.32 659.67 L1060.98 660.80 L1063.65 661.89 L1066.35 662.94 L1069.06 663.94 L1071.79 664.90 L1074.54 665.81 L1077.32 666.67 L1080.10 667.48 L1082.91 668.24 L1085.73 668.94 L1088.57 669.59 L1091.42 670.18 L1094.28 670.71 L1097.16 671.19 L1100.04 671.60 L1102.94 671.96 L1105.84 672.25 L1108.75 672.49 L1111.66 672.67 L1114.58 672.79 L1117.50 672.86 L1120.42 672.87 L1123.34 672.84 L1126.27 672.75 L1129.19 672.61 L1132.10 672.42 L1135.02 672.19 L1137.93 671.92 L1140.84 671.59 L1143.75 671.23 L1146.65 670.82 L1149.55 670.37 L1152.44 669.88 L1155.33 669.34 L1158.21 668.76 L1161.08 668.14 L1163.94 667.47 L1166.80 666.75 L1169.65 665.99 L1172.48 665.18 L1175.30 664.32 L1178.11 663.40 L1180.91 662.44 L1183.68 661.42 L1186.44 660.34 L1189.17 659.21 L1191.89 658.02 L1194.58 656.77 L1197.24 655.47 L1199.88 654.11 L1202.49 652.70 L1205.06 651.23 L1207.61 649.71 L1210.13 648.13 L1212.61 646.50 L1215.06 644.83 L1217.48 643.10 L1219.86 641.33 L1222.21 639.52 L1224.52 637.66 L1226.81 635.77 L1229.06 633.83 L1231.27 631.86 L1233.46 629.85 L1235.61 627.81 L1237.73 625.73 L1239.82 623.62 L1241.87 621.48 L1243.89 619.30 L1245.87 617.09 L1247.83 614.86 L1249.74 612.59 L1251.62 610.28 L1253.45 607.95 L1255.25 605.58 L1257.00 603.18 L1258.71 600.75 L1260.38 598.28 L1261.99 595.79 L1263.55 593.26 L1265.06 590.70 L1266.52 588.10 L1267.92 585.48 L1269.26 582.83 L1270.55 580.15 L1271.77 577.44 L1272.94 574.71 L1274.04 571.95 L1275.09 569.17 L1276.07 566.37 L1276.99 563.55 L1277.86 560.72 L1278.67 557.87 L1279.42 555.00 L1280.11 552.13 L1280.76 549.24 L1281.35 546.35 L1281.89 543.45 L1282.38 540.55 L1282.82 537.63 L1283.21 534.72 L1283.56 531.80 L1283.87 528.88 L1284.13 525.96 L1284.35 523.04 L1284.52 520.11 L1284.65 517.19 L1284.73 514.26 L1284.77 511.34 L1284.76 508.42 L1284.70 505.50 Z" fill="none" stroke="#c040c0" stroke-width="0.8" opacity="0.6"/><path d="M1285.30 505.50 L1285.16 502.57 L1284.97 499.65 L1284.74 496.74 L1284.45 493.83 L1284.11 490.92 L1283.72 488.03 L1283.28 485.14 L1282.79 482.27 L1282.26 479.40 L1281.67 476.55 L1281.04 473.71 L1280.36 470.88 L1279.63 468.07 L1278.86 465.27 L1278.04 462.48 L1277.17 459.72 L1276.26 456.96 L1275.30 454.23 L1274.30 451.51 L1273.25 448.81 L1272.16 446.13 L1271.02 443.47 L1269.84 440.83 L1268.62 438.22 L1267.36 435.62 L1266.05 433.05 L1264.70 430.50 L1263.32 427.97 L1261.89 425.46 L1260.42 422.99 L1258.91 420.53 L1257.36 418.10 L1255.78 415.70 L1254.15 413.33 L1252.49 410.98 L1250.79 408.66 L1249.05 406.37 L1247.28 404.10 L1245.47 401.87 L1243.63 399.67 L1241.75 397.49 L1239.83 395.35 L1237.89 393.24 L1235.90 391.16 L1233.89 389.11 L1231.84 387.10 L1229.76 385.11 L1227.65 383.17 L1225.51 381.25 L1223.33 379.37 L1221.13 377.53 L1218.90 375.72 L1216.63 373.95 L1214.34 372.21 L1212.02 370.51 L1209.67 368.85 L1207.30 367.22 L1204.90 365.64 L1202.47 364.09 L1200.01 362.58 L1197.54 361.11 L1195.03 359.68 L1192.50 358.30 L1189.95 356.95 L1187.38 355.64 L1184.78 354.38 L1182.17 353.16 L1179.53 351.98 L1176.87 350.84 L1174.19 349.75 L1171.49 348.70 L1168.77 347.70 L1166.04 346.74 L1163.28 345.83 L1160.52 344.96 L1157.73 344.14 L1154.93 343.37 L1152.12 342.64 L1149.29 341.96 L1146.45 341.33 L1143.60 340.74 L1140.73 340.21 L1137.86 339.72 L1134.97 339.28 L1132.08 338.89 L1129.17 338.55 L1126.26 338.26 L1123.35 338.03 L1120.43 337.84 L1117.50 337.70 L1114.57 337.61 L1111.64 337.58 L1108.70 337.60 L1105.76 337.66 L1102.83 337.78 L1099.89 337.96 L1096.96 338.18 L1094.02 338.46 L1091.10 338.79 L1088.17 339.17 L1085.25 339.61 L1082.34 340.09 L1079.44 340.63 L1076.54 341.23 L1073.66 341.87 L1070.78 342.57 L1067.92 343.32 L1065.07 344.12 L1062.23 344.98 L1059.41 345.89 L1056.60 346.85 L1053.81 347.86 L1051.04 348.92 L1048.28 350.03 L1045.55 351.20 L1042.84 352.42 L1040.15 353.68 L1037.48 355.00 L1034.83 356.37 L1032.21 357.78 L1029.62 359.25 L1027.06 360.76 L1024.52 362.32 L1022.01 363.93 L1019.53 365.58 L1017.08 367.28 L1014.66 369.03 L1012.28 370.83 L1009.93 372.66 L1007.61 374.54 L1005.33 376.47 L1003.09 378.44 L1000.88 380.44 L998.71 382.49 L996.58 384.58 L994.49 386.71 L992.44 388.88 L990.44 391.09 L988.47 393.33 L986.54 395.61 L984.66 397.93 L982.83 400.28 L981.03 402.66 L979.28 405.08 L977.58 407.53 L975.93 410.01 L974.32 412.52 L972.76 415.06 L971.25 417.62 L969.78 420.21 L968.37 422.83 L967.00 425.48 L965.68 428.15 L964.42 430.84 L963.20 433.55 L962.03 436.28 L960.92 439.04 L959.86 441.81 L958.85 444.60 L957.89 447.41 L956.98 450.23 L956.12 453.07 L955.32 455.92 L954.57 458.78 L953.87 461.66 L953.23 464.54 L952.63 467.44 L952.09 470.34 L951.61 473.25 L951.17 476.17 L950.79 479.10 L950.46 482.02 L950.18 484.96 L949.96 487.89 L949.78 490.83 L949.66 493.76 L949.60 496.70 L949.58 499.64 L949.61 502.57 L949.70 505.50 L949.84 508.43 L950.03 511.35 L950.26 514.26 L950.55 517.17 L950.89 520.08 L951.28 522.97 L951.72 525.86 L952.21 528.73 L952.74 531.60 L953.33 534.45 L953.96 537.29 L954.64 540.12 L955.37 542.93 L956.14 545.73 L956.96 548.52 L957.83 551.28 L958.74 554.04 L959.70 556.77 L960.70 559.49 L961.75 562.19 L962.84 564.87 L963.98 567.53 L965.16 570.17 L966.38 572.78 L967.64 575.38 L968.95 577.95 L970.30 580.50 L971.68 583.03 L973.11 585.54 L974.58 588.01 L976.09 590.47 L977.64 592.90 L979.22 595.30 L980.85 597.67 L982.51 600.02 L984.21 602.34 L985.95 604.63 L987.72 606.90 L989.53 609.13 L991.37 611.33 L993.25 613.51 L995.17 615.65 L997.11 617.76 L999.10 619.84 L1001.11 621.89 L1003.16 623.90 L1005.24 625.89 L1007.35 627.83 L1009.49 629.75 L1011.67 631.63 L1013.87 633.47 L1016.10 635.28 L1018.37 637.05 L1020.66 638.79 L1022.98 640.49 L1025.33 642.15 L1027.70 643.78 L1030.10 645.36 L1032.53 646.91 L1034.99 648.42 L1037.46 649.89 L1039.97 651.32 L1042.50 652.70 L1045.05 654.05 L1047.62 655.36 L1050.22 656.62 L1052.83 657.84 L1055.47 659.02 L1058.13 660.16 L1060.81 661.25 L1063.51 662.30 L1066.23 663.30 L1068.96 664.26 L1071.72 665.17 L1074.48 666.04 L1077.27 666.86 L1080.07 667.63 L1082.88 668.36 L1085.71 669.04 L1088.55 669.67 L1091.40 670.26 L1094.27 670.79 L1097.14 671.28 L1100.03 671.72 L1102.92 672.11 L1105.83 672.45 L1108.74 672.74 L1111.65 672.97 L1114.57 673.16 L1117.50 673.30 L1120.43 673.39 L1123.36 673.42 L1126.30 673.40 L1129.24 673.34 L1132.17 673.22 L1135.11 673.04 L1138.04 672.82 L1140.98 672.54 L1143.90 672.21 L1146.83 671.83 L1149.75 671.39 L1152.66 670.91 L1155.56 670.37 L1158.46 669.77 L1161.34 669.13 L1164.22 668.43 L1167.08 667.68 L1169.93 666.88 L1172.77 666.02 L1175.59 665.11 L1178.40 664.15 L1181.19 663.14 L1183.96 662.08 L1186.72 660.97 L1189.45 659.80 L1192.16 658.58 L1194.85 657.32 L1197.52 656.00 L1200.17 654.63 L1202.79 653.22 L1205.38 651.75 L1207.94 650.24 L1210.48 648.68 L1212.99 647.07 L1215.47 645.42 L1217.92 643.72 L1220.34 641.97 L1222.72 640.17 L1225.07 638.34 L1227.39 636.46 L1229.67 634.53 L1231.91 632.56 L1234.12 630.56 L1236.29 628.51 L1238.42 626.42 L1240.51 624.29 L1242.56 622.12 L1244.56 619.91 L1246.53 617.67 L1248.46 615.39 L1250.34 613.07 L1252.17 610.72 L1253.97 608.34 L1255.72 605.92 L1257.42 603.47 L1259.07 600.99 L1260.68 598.48 L1262.24 595.94 L1263.75 593.38 L1265.22 590.79 L1266.63 588.17 L1268.00 585.52 L1269.32 582.85 L1270.58 580.16 L1271.80 577.45 L1272.97 574.72 L1274.08 571.96 L1275.14 569.19 L1276.15 566.40 L1277.11 563.59 L1278.02 560.77 L1278.88 557.93 L1279.68 555.08 L1280.43 552.22 L1281.13 549.34 L1281.77 546.46 L1282.37 543.56 L1282.91 540.66 L1283.39 537.75 L1283.83 534.83 L1284.21 531.90 L1284.54 528.98 L1284.82 526.04 L1285.04 523.11 L1285.22 520.17 L1285.34 517.24 L1285.40 514.30 L1285.42 511.36 L1285.39 508.43 L1285.30 505.50 Z" fill="none" stroke="#2bdc2b" stroke-width="2.6"/><path d="M 1142.5 505.5 A 25 25 0 0 0 1126.0 482.3" fill="none" stroke="#111" stroke-width="1.2" stroke-dasharray="3 2"/><polygon points="1118.0,482.9 1125.7,478.5 1125.0,488.0" fill="#000"/></svg>
<!-- taskbar icons -->
<svg style="left:0;top:1137px" width="1800" height="63">
<defs>
<linearGradient id="win" x1="0" y1="0" x2="1" y2="1"><stop offset="0" stop-color="#2cc2f8"/><stop offset="1" stop-color="#0b63d6"/></linearGradient>
<linearGradient id="cop" x1="0" y1="0" x2="1" y2="1"><stop offset="0" stop-color="#1a9ef0"/><stop offset="0.35" stop-color="#2ec46a"/><stop offset="0.55" stop-color="#f5b41a"/><stop offset="0.75" stop-color="#f56a5a"/><stop offset="1" stop-color="#b84ae0"/></linearGradient>
<linearGradient id="tms" x1="0" y1="0" x2="1" y2="1"><stop offset="0" stop-color="#8a8ef8"/><stop offset="1" stop-color="#5054c8"/></linearGradient>
<linearGradient id="fld" x1="0" y1="0" x2="0" y2="1"><stop offset="0" stop-color="#ffe070"/><stop offset="1" stop-color="#f8c830"/></linearGradient>
<linearGradient id="edg" x1="0" y1="0" x2="1" y2="1"><stop offset="0" stop-color="#30c8e8"/><stop offset="1" stop-color="#40d870"/></linearGradient>
<linearGradient id="tv" x1="0" y1="0" x2="1" y2="1"><stop offset="0" stop-color="#fafafa"/><stop offset="1" stop-color="#cfcfcf"/></linearGradient>
</defs>
<!-- weather -->
<g transform="translate(39.7,30.3)" stroke="#2a7ee0" stroke-width="2.6" stroke-linecap="round" fill="none">
<path d="M0 -13 V13 M-11.3 -6.5 L11.3 6.5 M-11.3 6.5 L11.3 -6.5"/>
<path d="M-3.5 -10.5 L0 -7 L3.5 -10.5 M-3.5 10.5 L0 7 L3.5 10.5" />
<path d="M-10.8 -2 L-6 -3.5 L-7.3 -8.3 M10.8 2 L6 3.5 L7.3 8.3 M-10.8 2 L-6 3.5 L-7.3 8.3 M10.8 -2 L6 -3.5 L7.3 -8.3"/>
</g>
<circle cx="39.7" cy="30.3" r="3" fill="#dadada" stroke="#2a7ee0" stroke-width="2"/>
<circle cx="50" cy="18.3" r="10" fill="#c62a22"/>
<!-- start -->
<rect x="476" y="17" width="14.6" height="14.6" rx="1.5" fill="url(#win)"/>
<rect x="492" y="17" width="14.6" height="14.6" rx="1.5" fill="url(#win)"/>
<rect x="476" y="32.7" width="14.6" height="14.6" rx="1.5" fill="url(#win)"/>
<rect x="492" y="32.7" width="14.6" height="14.6" rx="1.5" fill="url(#win)"/>
<!-- search -->
<rect x="525.5" y="11.3" width="286.5" height="40" rx="20" fill="#f2f2f2" stroke="#d0d0d0" stroke-width="1"/>
<circle cx="548" cy="29.5" r="6.8" fill="none" stroke="#1a1a1a" stroke-width="2"/>
<line x1="553" y1="34.5" x2="558" y2="40" stroke="#1a1a1a" stroke-width="2.2" stroke-linecap="round"/>
<!-- task view -->
<rect x="837" y="16.7" width="23.7" height="19.7" fill="url(#tv)"/>
<path d="M830 24.8 H837 V36.4 H853 V45.3 H830 Z" fill="#1e1e1e" />
<rect x="837" y="24.8" width="16" height="11.6" fill="#b0b0b0"/>
<!-- copilot -->
<linearGradient id="copL" x1="0" y1="0" x2="0" y2="1"><stop offset="0" stop-color="#1aa8ee"/><stop offset="0.55" stop-color="#58b848"/><stop offset="1" stop-color="#e8c81a"/></linearGradient>
<linearGradient id="copR" x1="0" y1="0" x2="0" y2="1"><stop offset="0" stop-color="#b448e0"/><stop offset="0.5" stop-color="#f45a8a"/><stop offset="1" stop-color="#f89a4a"/></linearGradient>
<path d="M895 17 Q889 17 888.5 23 L888 31 Q888 38 894 38 L901 38 L904 26.5 Q905 24.5 907 24.5 L912 24.5 L909.5 19 Q908.5 17 905 17 Z" fill="url(#copL)"/>
<path d="M904 17 H907 Q909 17 910 19.5 L912 24.5 H904 Z" fill="#1850c8"/>
<path d="M906 25 H915 Q919.5 25 919 30 L918 39 Q917 45 911 45 H900 Q902.5 43 903 40 Z" fill="url(#copR)"/>
<path d="M896.5 38 H903.2 L901.5 43.5 Q900.5 45.5 898.5 45 Q896.5 44 896.5 41 Z" fill="#e8522a"/>
<!-- teams -->
<circle cx="955" cy="19.5" r="4.5" fill="#8c90f4"/><circle cx="966.5" cy="21.5" r="3.6" fill="#9a9ef8"/>
<rect x="951" y="26" width="15" height="19" rx="5" fill="url(#tms)"/>
<rect x="962" y="27" width="12.5" height="17" rx="5" fill="#6a6ee8"/>
<rect x="945" y="31.5" width="13.5" height="13.5" rx="2" fill="#4448b8"/>
<path d="M948 35 H955.5 M951.7 35 V42" stroke="#fff" stroke-width="2"/>
<!-- chrome -->
<path d="M1019 31.4 L1004.97 23.30 A16.2 16.2 0 0 1 1033.03 23.30 Z" fill="#e33b2e"/><path d="M1019 31.4 L1033.03 23.30 A16.2 16.2 0 0 1 1019.00 47.60 Z" fill="#f9c61e"/><path d="M1019 31.4 L1019.00 47.60 A16.2 16.2 0 0 1 1004.97 23.30 Z" fill="#23a04a"/><circle cx="1019" cy="31.4" r="7.8" fill="#fff"/><circle cx="1019" cy="31.4" r="6.2" fill="#3d7fe2"/>
<rect x="1015" y="52.8" width="8" height="3" rx="1.5" fill="#707070"/>
<!-- files -->
<path d="M1060.5 19 H1071 L1074 22 H1093 V46 H1060.5 Z" fill="#e2a82a"/>
<rect x="1060.5" y="23.5" width="32.5" height="22.5" rx="1.5" fill="url(#fld)"/>
<rect x="1067" y="35" width="19.5" height="11" rx="3" fill="#1a78d0"/>
<!-- ballbar active -->
<rect x="1110.7" y="6.3" width="48.6" height="50" rx="5" fill="#f0f0f0"/>
<rect x="1124.7" y="52.6" width="20.6" height="3.7" rx="1.8" fill="#1f6fd0"/>
<line x1="1122.5" y1="18.5" x2="1145.5" y2="42" stroke="#222" stroke-width="4.2" stroke-linecap="round"/>
<line x1="1122" y1="18" x2="1125" y2="21" stroke="#9a9a9a" stroke-width="4" stroke-linecap="round"/>
<line x1="1143" y1="39.5" x2="1146" y2="42.5" stroke="#9a9a9a" stroke-width="4" stroke-linecap="round"/>
<polygon points="1134,16.3 1141,20.3 1134,24.3" fill="#1010e8"/><polygon points="1141.5,16.3 1149,20.3 1141.5,24.3" fill="#1010e8"/>
<!-- store -->
<path d="M1183 20 V16 Q1183 13 1186 13 H1199 Q1202 13 1202 16 V20" fill="none" stroke="#3fa8e8" stroke-width="2"/>
<path d="M1177.3 19 H1208 V43 Q1208 47 1204 47 H1181.3 Q1177.3 47 1177.3 43 Z" fill="#1d4e8e"/>
<rect x="1186" y="25.5" width="6.5" height="6.5" fill="#f05a28"/><rect x="1193.8" y="25.5" width="6.5" height="6.5" fill="#7eba00"/>
<rect x="1186" y="33.3" width="6.5" height="6.5" fill="#00a4ef"/><rect x="1193.8" y="33.3" width="6.5" height="6.5" fill="#ffb900"/>
<!-- outlook -->
<rect x="1243" y="20" width="23" height="25.5" rx="1.5" fill="#1a7ad8"/>
<path d="M1243 32 L1255 40 L1266 32 V45.5 H1243 Z" fill="#2a98f0"/>
<rect x="1234.7" y="26.5" width="17" height="16.5" rx="1.5" fill="#0f5cb8"/>
<ellipse cx="1243.2" cy="34.7" rx="4.3" ry="4.8" fill="none" stroke="#fff" stroke-width="2"/>
<circle cx="1262.7" cy="19" r="10.2" fill="#c62a22"/>
<path d="M1262.7 13 V21" stroke="#fff" stroke-width="2.6" stroke-linecap="round"/><circle cx="1262.7" cy="24.7" r="1.6" fill="#fff"/>
<!-- edge -->
<path d="M1295 36 Q1292 18 1310 15 Q1326 14 1325.5 30 Q1325 36 1317 37 Q1310 37 1310 32 Q1310 28 1315 28 Q1312 21 1304 24 Q1297 28 1300 38 Z" fill="url(#edg)"/>
<path d="M1300 38 Q1305 47 1317 46 Q1323 45 1325 40 Q1320 44 1312 42 Q1304 40 1300 30 Z" fill="#1a5cb0"/>
<path d="M1295 36 Q1296 28 1304 24 Q1299 30 1300 38 Z" fill="#1478d0"/>
<rect x="1293" y="36" width="15.5" height="11" rx="1.5" fill="#b8701a"/><rect x="1293" y="39.5" width="15.5" height="1.2" fill="#e0a040"/>
<!-- tray -->
<path d="M1516 34.5 L1522.7 28 L1529.5 34.5" fill="none" stroke="#1a1a1a" stroke-width="1.3"/>
<path d="M1556 30 A9 9 0 0 1 1573 25" fill="none" stroke="#1a1a1a" stroke-width="1.3"/>
<path d="M1569 21 L1573.5 25.5 L1568 26.5" fill="none" stroke="#1a1a1a" stroke-width="1.3"/>
<path d="M1563.5 40 L1557 38.5 L1561 34" fill="none" stroke="#1a1a1a" stroke-width="1.3"/>
<circle cx="1570.7" cy="36.6" r="5.3" fill="#1f78e0"/>
<path d="M1597 28.5 Q1607 19 1617.5 28.5 M1600.5 32 Q1607 26 1614 32 M1603.7 35.3 Q1607 32.5 1610.5 35.3" fill="none" stroke="#1a1a1a" stroke-width="1.3"/>
<circle cx="1607" cy="38.5" r="1.4" fill="#1a1a1a"/>
<path d="M1628 28 H1632 L1637.5 23.5 V39.5 L1632 35 H1628 Z" fill="none" stroke="#1a1a1a" stroke-width="1.2"/>
<path d="M1640.5 28 Q1642.5 31.5 1640.5 35" fill="none" stroke="#1a1a1a" stroke-width="1.2"/>
<path d="M1644 25 Q1648 31.5 1644 38" fill="none" stroke="#8a8a8a" stroke-width="1.2"/>
<rect x="1660.5" y="25.5" width="18" height="12" rx="1.5" fill="none" stroke="#1a1a1a" stroke-width="1.5"/>
<rect x="1663" y="28" width="13" height="7" fill="#1a1a1a"/>
<rect x="1679" y="29.5" width="2.2" height="4" fill="#1a1a1a"/>
<path d="M1664 21.5 L1661.5 27 L1665 27 L1663 31" fill="none" stroke="#1a1a1a" stroke-width="1.3"/>
</svg>
<svg class="a" style="left:0;top:0" width="1800" height="1200">
<text x="29.08" y="21.00" font-family="Liberation Sans" font-size="15.26" font-weight="400" fill="#1c1c1c" textLength="389.53" lengthAdjust="spacingAndGlyphs" xml:space="preserve" >VM25 #10549 XL.b5r - Renishaw Ballbar 20 Quick Check</text>
<text x="37.67" y="58.50" font-family="Liberation Sans" font-size="30.52" font-weight="400" fill="#000" textLength="204.05" lengthAdjust="spacingAndGlyphs" xml:space="preserve" >Review results</text>
<text x="111.00" y="102.40" font-family="Liberation Sans" font-size="16.72" font-weight="700" fill="#000" textLength="136.67" lengthAdjust="spacingAndGlyphs" xml:space="preserve" >1 Percentages</text>
<text x="278.00" y="102.40" font-family="Liberation Sans" font-size="16.72" font-weight="700" fill="#f4f4f4" textLength="81.67" lengthAdjust="spacingAndGlyphs" xml:space="preserve" >2 Values</text>
<text x="389.00" y="102.40" font-family="Liberation Sans" font-size="16.72" font-weight="700" fill="#f4f4f4" textLength="69.67" lengthAdjust="spacingAndGlyphs" xml:space="preserve" >3 Table</text>
<text x="487.00" y="102.40" font-family="Liberation Sans" font-size="16.72" font-weight="700" fill="#f4f4f4" textLength="163.67" lengthAdjust="spacingAndGlyphs" xml:space="preserve" >4 Test conditions</text>
<text x="115.66" y="149.60" font-family="Liberation Sans" font-size="22.38" font-weight="700" fill="#000" textLength="271.24" lengthAdjust="spacingAndGlyphs" xml:space="preserve" >Ballbar diagnostics (%)</text>
<text x="115.71" y="179.60" font-family="Liberation Sans" font-size="21.51" font-weight="700" fill="#000" textLength="196.15" lengthAdjust="spacingAndGlyphs" xml:space="preserve" >VM25 #10549 XL</text>
<text x="116.15" y="200.80" font-family="Liberation Sans" font-size="14.24" font-weight="400" fill="#2a2a2a" textLength="113.42" lengthAdjust="spacingAndGlyphs" xml:space="preserve" >Operator: Cole</text>
<text x="116.15" y="220.20" font-family="Liberation Sans" font-size="14.24" font-weight="400" fill="#2a2a2a" textLength="218.42" lengthAdjust="spacingAndGlyphs" xml:space="preserve" >Date: 2025-Sep-17 13:10:08</text>
<text x="1623.55" y="201.10" font-family="Liberation Sans" font-size="14.24" font-weight="400" fill="#2a2a2a" textLength="164.22" lengthAdjust="spacingAndGlyphs" xml:space="preserve" >Machine: Quick check</text>
<text x="1436.65" y="220.30" font-family="Liberation Sans" font-size="14.24" font-weight="400" fill="#2a2a2a" textLength="351.12" lengthAdjust="spacingAndGlyphs" xml:space="preserve" >QC20-W: 0FRR41, Last calibrated: 2021-09-13</text>
<text x="119.25" y="268.30" font-family="Liberation Sans" font-size="14.10" font-weight="400" fill="#333" textLength="34.31" lengthAdjust="spacingAndGlyphs" xml:space="preserve" >32%</text>
<text x="161.25" y="268.30" font-family="Liberation Sans" font-size="14.10" font-weight="400" fill="#333" textLength="89.31" lengthAdjust="spacingAndGlyphs" xml:space="preserve" >Squareness</text>
<text x="252.65" y="287.80" font-family="Liberation Sans" font-size="14.10" font-weight="400" fill="#2a2a2a" textLength="102.51" lengthAdjust="spacingAndGlyphs" xml:space="preserve" >0.000085in/in</text>
<text x="119.25" y="307.60" font-family="Liberation Sans" font-size="14.10" font-weight="400" fill="#333" textLength="34.31" lengthAdjust="spacingAndGlyphs" xml:space="preserve" >21%</text>
<text x="161.25" y="307.60" font-family="Liberation Sans" font-size="14.10" font-weight="400" fill="#333" textLength="135.31" lengthAdjust="spacingAndGlyphs" xml:space="preserve" >Reversal spikes X</text>
<text x="267.15" y="330.00" font-family="Liberation Sans" font-size="14.10" font-weight="400" fill="#2a2a2a" textLength="89.41" lengthAdjust="spacingAndGlyphs" xml:space="preserve" >-0.000181in</text>
<text x="267.15" y="354.90" font-family="Liberation Sans" font-size="14.10" font-weight="400" fill="#2a2a2a" textLength="89.41" lengthAdjust="spacingAndGlyphs" xml:space="preserve" >-0.000327in</text>
<text x="119.25" y="377.20" font-family="Liberation Sans" font-size="14.10" font-weight="400" fill="#333" textLength="34.31" lengthAdjust="spacingAndGlyphs" xml:space="preserve" >15%</text>
<text x="161.25" y="377.20" font-family="Liberation Sans" font-size="14.10" font-weight="400" fill="#333" textLength="132.31" lengthAdjust="spacingAndGlyphs" xml:space="preserve" >Scaling mismatch</text>
<text x="262.85" y="396.70" font-family="Liberation Sans" font-size="14.10" font-weight="400" fill="#2a2a2a" textLength="83.41" lengthAdjust="spacingAndGlyphs" xml:space="preserve" >0.000472in</text>
<text x="119.25" y="416.80" font-family="Liberation Sans" font-size="14.10" font-weight="400" fill="#333" textLength="34.31" lengthAdjust="spacingAndGlyphs" xml:space="preserve" >10%</text>
<text x="161.25" y="416.80" font-family="Liberation Sans" font-size="14.10" font-weight="400" fill="#333" textLength="133.31" lengthAdjust="spacingAndGlyphs" xml:space="preserve" >Reversal spikes Y</text>
<text x="267.15" y="439.30" font-family="Liberation Sans" font-size="14.10" font-weight="400" fill="#2a2a2a" textLength="89.41" lengthAdjust="spacingAndGlyphs" xml:space="preserve" >-0.000157in</text>
<text x="267.15" y="464.00" font-family="Liberation Sans" font-size="14.10" font-weight="400" fill="#2a2a2a" textLength="89.41" lengthAdjust="spacingAndGlyphs" xml:space="preserve" >-0.000134in</text>
<text x="119.25" y="486.40" font-family="Liberation Sans" font-size="14.10" font-weight="400" fill="#333" textLength="24.81" lengthAdjust="spacingAndGlyphs" xml:space="preserve" >7%</text>
<text x="161.25" y="486.40" font-family="Liberation Sans" font-size="14.10" font-weight="400" fill="#333" textLength="105.31" lengthAdjust="spacingAndGlyphs" xml:space="preserve" >Cyclic error X</text>
<text x="269.55" y="506.20" font-family="Liberation Sans" font-size="14.10" font-weight="400" fill="#2a2a2a" textLength="83.01" lengthAdjust="spacingAndGlyphs" xml:space="preserve" >0.000102in</text>
<text x="269.55" y="525.70" font-family="Liberation Sans" font-size="14.10" font-weight="400" fill="#2a2a2a" textLength="83.01" lengthAdjust="spacingAndGlyphs" xml:space="preserve" >0.000110in</text>
<text x="161.65" y="569.40" font-family="Liberation Sans" font-size="14.10" font-weight="400" fill="#2a2a2a" textLength="146.31" lengthAdjust="spacingAndGlyphs" xml:space="preserve" >Positional tolerance</text>
<text x="362.95" y="569.40" font-family="Liberation Sans" font-size="14.10" font-weight="400" fill="#2a2a2a" textLength="83.01" lengthAdjust="spacingAndGlyphs" xml:space="preserve" >0.027311in</text>
<text x="161.65" y="589.10" font-family="Liberation Sans" font-size="14.10" font-weight="400" fill="#2a2a2a" textLength="104.41" lengthAdjust="spacingAndGlyphs" xml:space="preserve" >Best fit radius</text>
<text x="362.95" y="589.10" font-family="Liberation Sans" font-size="14.10" font-weight="400" fill="#2a2a2a" textLength="83.01" lengthAdjust="spacingAndGlyphs" xml:space="preserve" >5.910327in</text>
<text x="161.65" y="609.00" font-family="Liberation Sans" font-size="14.10" font-weight="400" fill="#2a2a2a" textLength="77.91" lengthAdjust="spacingAndGlyphs" xml:space="preserve" >Circularity</text>
<text x="362.95" y="609.00" font-family="Liberation Sans" font-size="14.10" font-weight="400" fill="#2a2a2a" textLength="83.01" lengthAdjust="spacingAndGlyphs" xml:space="preserve" >0.000870in</text>
<text x="531.83" y="635.30" font-family="Liberation Sans" font-size="14.54" font-weight="400" fill="#2a2a2a" textLength="42.75" lengthAdjust="spacingAndGlyphs" xml:space="preserve" >Run 1</text>
<text x="531.83" y="671.70" font-family="Liberation Sans" font-size="14.54" font-weight="400" fill="#2a2a2a" textLength="43.25" lengthAdjust="spacingAndGlyphs" xml:space="preserve" >Run 2</text>
<text x="531.83" y="708.50" font-family="Liberation Sans" font-size="14.54" font-weight="400" fill="#2a2a2a" textLength="30.75" lengthAdjust="spacingAndGlyphs" xml:space="preserve" >Fit 1</text>
<text x="531.83" y="745.30" font-family="Liberation Sans" font-size="14.54" font-weight="400" fill="#2a2a2a" textLength="31.75" lengthAdjust="spacingAndGlyphs" xml:space="preserve" >Fit 2</text>
<text x="1084.95" y="266.80" font-family="Liberation Sans" font-size="14.24" font-weight="400" fill="#2a2a2a" textLength="20.62" lengthAdjust="spacingAndGlyphs" xml:space="preserve" >+Y</text>
<text x="1349.11" y="531.70" font-family="Liberation Sans" font-size="14.83" font-weight="400" fill="#2a2a2a" textLength="22.28" lengthAdjust="spacingAndGlyphs" xml:space="preserve" >+X</text>
<text x="1627.39" y="745.40" font-family="Liberation Sans" font-size="15.12" font-weight="400" fill="#2a2a2a" textLength="111.51" lengthAdjust="spacingAndGlyphs" xml:space="preserve" >0.002000in/div</text>
<text x="65.24" y="1163.30" font-family="Liberation Sans" font-size="15.99" font-weight="400" fill="#2a2a2a" textLength="77.60" lengthAdjust="spacingAndGlyphs" xml:space="preserve" >Light snow</text>
<text x="66.84" y="1184.60" font-family="Liberation Sans" font-size="15.99" font-weight="400" fill="#5c5c5c" textLength="72.70" lengthAdjust="spacingAndGlyphs" xml:space="preserve" >Tomorrow</text>
<text x="45.67" y="1160.50" font-family="Liberation Sans" font-size="13.81" font-weight="700" fill="#fff" textLength="8.38" lengthAdjust="spacingAndGlyphs" xml:space="preserve" >2</text>
<text x="571.91" y="1175.70" font-family="Liberation Sans" font-size="18.17" font-weight="400" fill="#5a5a5a" textLength="54.82" lengthAdjust="spacingAndGlyphs" xml:space="preserve" >Search</text>
<text x="1717.27" y="1162.90" font-family="Liberation Sans" font-size="15.55" font-weight="400" fill="#1a1a1a" textLength="57.06" lengthAdjust="spacingAndGlyphs" xml:space="preserve" >4:53 PM</text>
<text x="1701.27" y="1183.30" font-family="Liberation Sans" font-size="15.55" font-weight="400" fill="#1a1a1a" textLength="73.56" lengthAdjust="spacingAndGlyphs" xml:space="preserve" >1/15/2026</text>
<text x="1602.17" y="150.90" font-family="Liberation Sans" font-size="30.52" font-weight="700" fill="#f7922e" textLength="158.05" lengthAdjust="spacingAndGlyphs" xml:space="preserve" stroke="#f7922e" stroke-width="0.6">RENISHAW</text>
<text x="20.78" y="221.80" font-family="Liberation Sans" font-size="15.26" font-weight="700" fill="#000" textLength="46.83" lengthAdjust="spacingAndGlyphs" xml:space="preserve" stroke="#000" stroke-width="0.5">ASME</text>
<text x="22.51" y="240.70" font-family="Liberation Sans" font-size="16.42" font-weight="700" fill="#000" textLength="44.84" lengthAdjust="spacingAndGlyphs" xml:space="preserve" stroke="#000" stroke-width="0.5">B5.54</text>
<text x="21.68" y="292.60" font-family="Liberation Sans" font-size="15.26" font-weight="700" fill="#000" textLength="45.93" lengthAdjust="spacingAndGlyphs" xml:space="preserve" stroke="#000" stroke-width="0.5">ASME</text>
<text x="22.51" y="311.40" font-family="Liberation Sans" font-size="16.42" font-weight="700" fill="#000" textLength="44.84" lengthAdjust="spacingAndGlyphs" xml:space="preserve" stroke="#000" stroke-width="0.5">B5.57</text>
<text x="30.58" y="363.60" font-family="Liberation Sans" font-size="15.26" font-weight="700" fill="#000" textLength="28.43" lengthAdjust="spacingAndGlyphs" xml:space="preserve" stroke="#000" stroke-width="0.5">ISO</text>
<text x="20.41" y="382.40" font-family="Liberation Sans" font-size="16.42" font-weight="700" fill="#000" textLength="47.94" lengthAdjust="spacingAndGlyphs" xml:space="preserve" stroke="#000" stroke-width="0.5">230-4</text>
<text x="28.18" y="451.90" font-family="Liberation Sans" font-size="15.26" font-weight="700" fill="#000" textLength="38.23" lengthAdjust="spacingAndGlyphs" xml:space="preserve" stroke="#000" stroke-width="0.5">JIS  B</text>
<text x="26.81" y="503.40" font-family="Liberation Sans" font-size="16.57" font-weight="700" fill="#000" textLength="40.56" lengthAdjust="spacingAndGlyphs" xml:space="preserve" stroke="#000" stroke-width="0.5">GB/T</text>
<text x="15.18" y="523.80" font-family="Liberation Sans" font-size="15.26" font-weight="700" fill="#000" textLength="52.13" lengthAdjust="spacingAndGlyphs" xml:space="preserve" stroke="#000" stroke-width="0.5">17421.4</text>
</svg>
</body></html>
